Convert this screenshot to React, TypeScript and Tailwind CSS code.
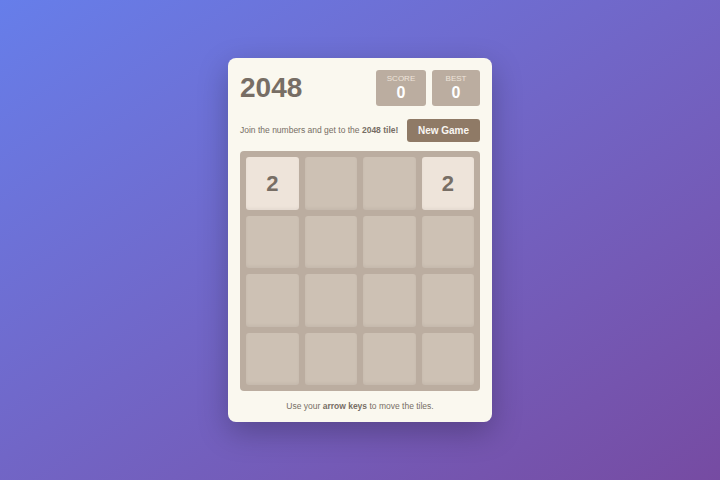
const board = [
  [2, 0, 0, 2],
  [0, 0, 0, 0],
  [0, 0, 0, 0],
  [0, 0, 0, 0],
];

const Tile = ({ value }: { value: number }) => (
  <div
    className={`flex items-center justify-center rounded-[3px] text-[22px] font-bold text-[#776e65] shadow-[inset_0_-2px_3px_rgba(0,0,0,0.04)] ${
      value ? 'bg-[#eee4da]' : 'bg-[#cdc1b4]'
    }`}
  >
    {value ? value : ''}
  </div>
);

export default function App() {
  return (
    <div
      className="flex min-h-screen items-center justify-center bg-gradient-to-br from-[#667eea] to-[#764ba2]"
      style={{ fontFamily: '"Liberation Sans", Arial, sans-serif' }}
    >
      <div className="w-[264px] rounded-lg bg-[#faf8ef] px-3 pt-3 pb-[9px] shadow-[0_10px_30px_rgba(0,0,0,0.25)]">
        <div className="flex h-9 items-center justify-between">
          <h1 className="text-[28px] leading-none font-bold text-[#776e65]">2048</h1>
          <div className="flex gap-[6px]">
            <div className="flex h-9 w-[50px] flex-col items-center justify-center rounded-[3px] bg-[#bbada0]">
              <span className="text-[8px] leading-none text-[#eee4da] uppercase">Score</span>
              <span className="mt-[2px] text-[16px] leading-none font-bold text-white">0</span>
            </div>
            <div className="flex h-9 w-[48px] flex-col items-center justify-center rounded-[3px] bg-[#bbada0]">
              <span className="text-[8px] leading-none text-[#eee4da] uppercase">Best</span>
              <span className="mt-[2px] text-[16px] leading-none font-bold text-white">0</span>
            </div>
          </div>
        </div>

        <div className="mt-[13px] flex items-center justify-between">
          <p className="text-[8.5px] whitespace-nowrap text-[#776e65]">
            Join the numbers and get to the <strong>2048 tile!</strong>
          </p>
          <button className="h-[23px] w-[73px] rounded-[3px] bg-[#8f7a66] text-[10px] font-bold text-[#f9f6f2]">
            New Game
          </button>
        </div>

        <div className="mt-[9px] grid h-[240px] grid-cols-4 grid-rows-4 gap-[6px] rounded-[4px] bg-[#bbada0] p-[6px]">
          {board.flat().map((v, i) => (
            <Tile key={i} value={v} />
          ))}
        </div>

        <p className="mt-2 text-center text-[8.5px] leading-[14px] text-[#776e65]">
          Use your <strong>arrow keys</strong> to move the tiles.
        </p>
      </div>
    </div>
  );
}
